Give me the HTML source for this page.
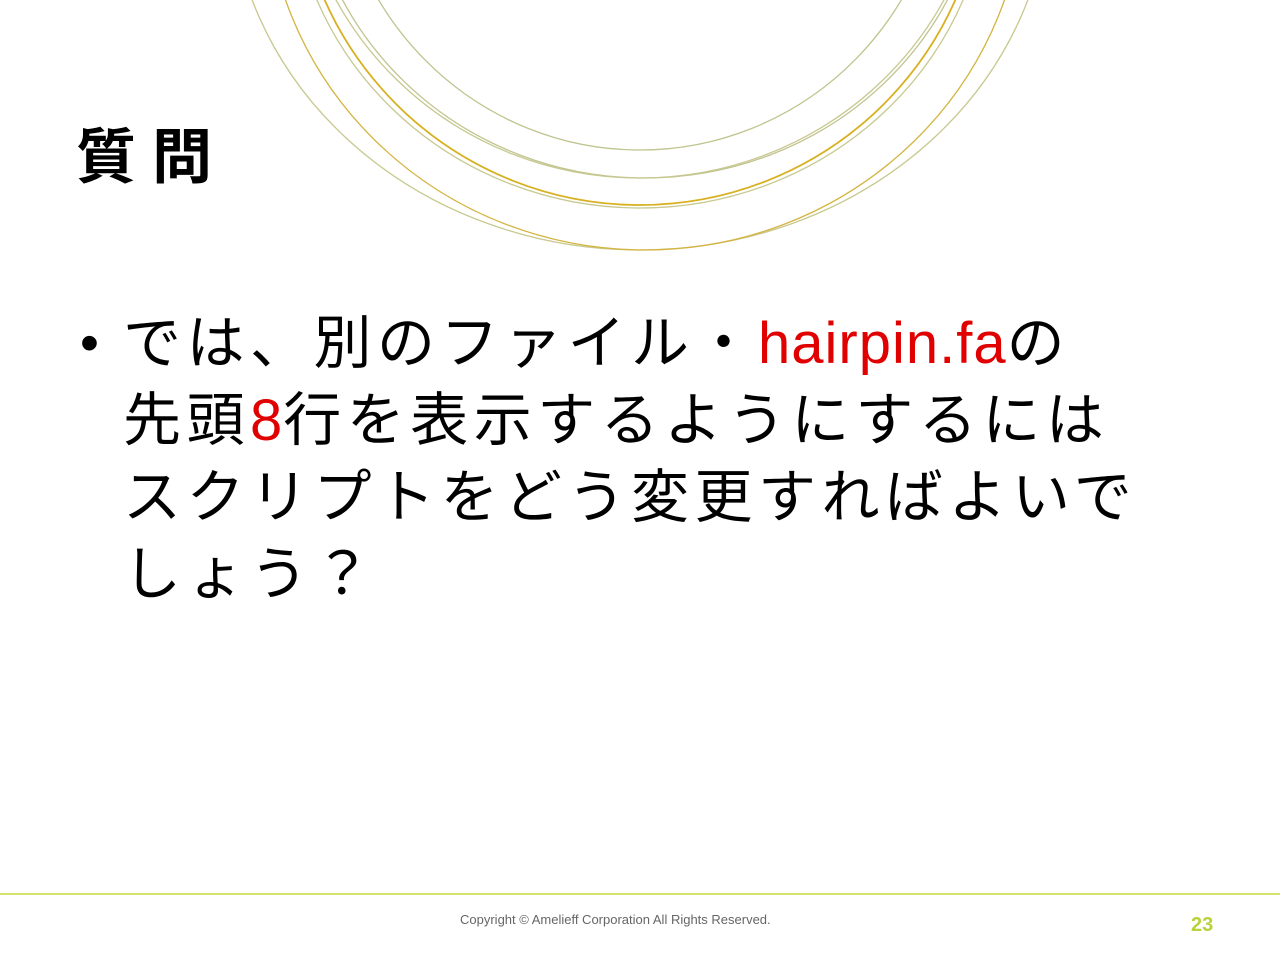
<!DOCTYPE html>
<html><head><meta charset="utf-8"><style>
body{margin:0;width:1280px;height:960px;background:#fff;position:relative;overflow:hidden;font-family:"Liberation Sans","Noto Sans CJK JP",sans-serif}
.t{position:absolute;left:76px;top:118px;font-size:60px;font-weight:bold;color:#000;letter-spacing:16px;line-height:80px}
.b{position:absolute;left:123px;top:305px;font-size:58px;line-height:77px;color:#000;white-space:nowrap;letter-spacing:5.5px}
.dot{position:absolute;left:80px;top:305px;font-size:54px;line-height:77px}
.r{color:#e00000;letter-spacing:1px}
.hr{position:absolute;left:0;top:893px;width:1280px;height:2px;background:#d6e36a}
.c{position:absolute;left:460px;top:912px;font-size:13px;color:#666}
.n{position:absolute;left:1191px;top:914px;font-size:20px;font-weight:bold;color:#b7d23a}
</style></head><body>
<svg width="1280" height="260" style="position:absolute;left:0;top:0" fill="none">
<g stroke-width="1.3">
<ellipse cx="640" cy="-120" rx="410" ry="370" stroke="#c8c890"/>
<ellipse cx="645" cy="-120" rx="380" ry="370" stroke="#d4b440"/>
<ellipse cx="640" cy="-130" rx="350" ry="338" stroke="#c8c890"/>
<ellipse cx="640" cy="-140" rx="345" ry="345" stroke="#d8b020" stroke-width="1.8"/>
<ellipse cx="645" cy="-150" rx="340" ry="328" stroke="#c0c490"/>
<ellipse cx="640" cy="-160" rx="345" ry="338" stroke="#c8c890"/>
<ellipse cx="640" cy="-160" rx="305" ry="310" stroke="#c0c490"/>
</g></svg>
<div class="t">質問</div>
<div class="dot">•</div>
<div class="b">では、別のファイル・<span class="r">hairpin.fa</span>の<br>先頭<span class="r">8</span>行を表示するようにするには<br>スクリプトをどう変更すればよいで<br>しょう？</div>
<div class="hr"></div>
<div class="c">Copyright © Amelieff Corporation All Rights Reserved.</div>
<div class="n">23</div>
</body></html>
